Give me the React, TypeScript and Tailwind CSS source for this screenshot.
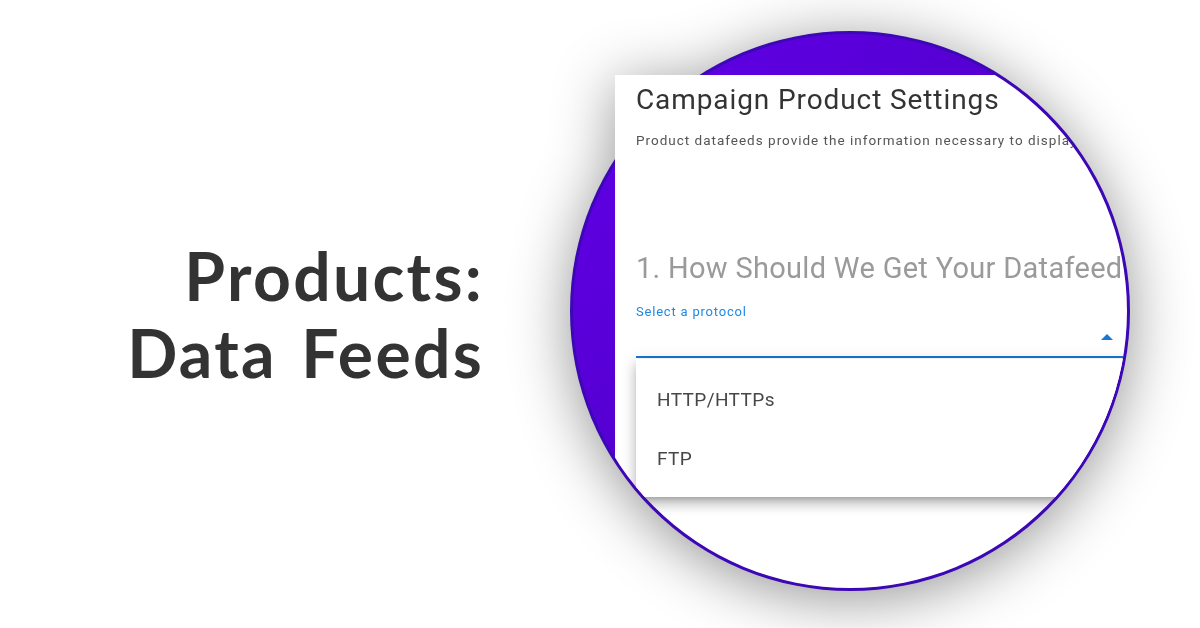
const roboto = "font-['Roboto','Liberation_Sans',sans-serif]";

function ProtocolMenu() {
  return (
    <div className="absolute left-[21px] top-[284px] right-0 h-[138px] bg-white pt-[11px] shadow-[0_5px_5px_-3px_rgba(0,0,0,0.2),0_8px_10px_1px_rgba(0,0,0,0.14),0_3px_14px_2px_rgba(0,0,0,0.12)]">
      {['HTTP/HTTPs', 'FTP'].map((item) => (
        <div key={item} className="h-[59px] pl-[21px] text-[19px] leading-[59px] tracking-[0.4px] text-[#474747]">
          {item}
        </div>
      ))}
    </div>
  );
}

function SettingsCard() {
  return (
    <div
      className={`absolute left-[45px] top-[44px] w-[515px] h-[516px] bg-white ${roboto} [clip-path:path('M0_0H235V236H0Z_M235_-41A277_277_0_0_1_235_513A277_277_0_0_1_235_-41Z')]`}
    >
      <div className="relative h-full pl-[21px] pt-[9px]">
        <h2 className="text-[28px] leading-[32px] tracking-[0.9px] text-[#333] whitespace-nowrap">Campaign Product Settings</h2>
        <p className="mt-[16px] text-[13.5px] leading-[16px] tracking-[1px] text-[#555] whitespace-nowrap">
          Product datafeeds provide the information necessary to display your products
        </p>
        <h3 className="mt-[103px] text-[29px] leading-[34px] tracking-[0.3px] text-[#9a9a9a] whitespace-nowrap">
          1. How Should We Get Your Datafeed
        </h3>
        <div className="mt-[19px] text-[13px] leading-[16px] tracking-[0.8px] text-[#1e88e5]">Select a protocol</div>

        {/* select field underline + open arrow */}
        <div className="absolute left-[21px] right-0 top-[281px] h-[2px] bg-[#1976d2]" />
        <svg className="absolute left-[486px] top-[259px]" width="12" height="6" viewBox="0 0 12 6">
          <path d="M0 6 L6 0 L12 6 Z" fill="#1976d2" />
        </svg>

        <ProtocolMenu />
      </div>
    </div>
  );
}

function Spotlight() {
  return (
    <div className="relative w-[560px] h-[560px] shrink-0 drop-shadow-[0_8px_30px_rgba(0,0,0,0.42)]">
      <div className="absolute inset-0 rounded-full bg-[#3c07b4] p-[3px]">
        <div className="w-full h-full rounded-full bg-gradient-to-br from-[#6200ea] to-[#4300b0]" />
      </div>
      <SettingsCard />
    </div>
  );
}

export default function App() {
  return (
    <div className="w-[1200px] h-[628px] bg-white flex items-start pt-[31px] overflow-hidden">
      <div className="w-[484px] shrink-0 self-center -mt-[31px] text-right font-['Lato','Noto_Sans',sans-serif] font-bold text-[66px] leading-[77px] tracking-[2.3px] [word-spacing:6px] text-[#333]">
        <div>Products:</div>
        <div>Data Feeds</div>
      </div>
      <div className="ml-[86px]">
        <Spotlight />
      </div>
    </div>
  );
}
